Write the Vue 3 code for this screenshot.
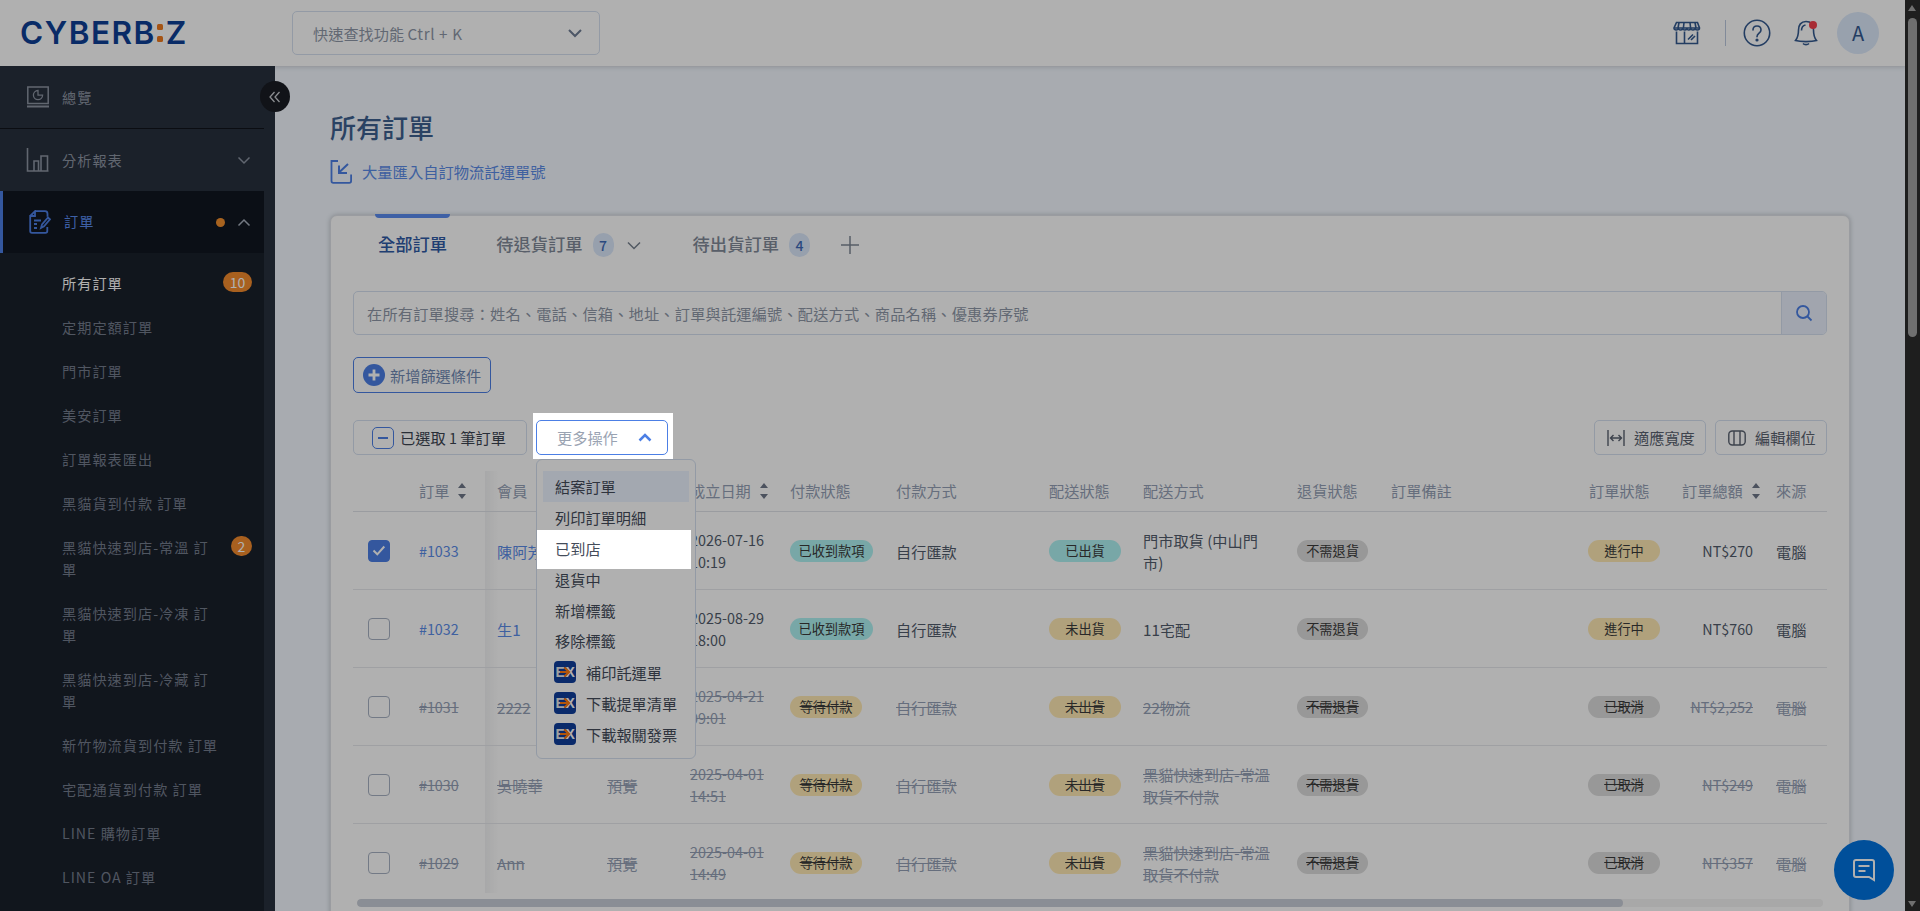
<script setup>
const subMenu = [
  { t: '所有訂單', badge: '10', active: true },
  { t: '定期定額訂單' },
  { t: '門市訂單' },
  { t: '美安訂單' },
  { t: '訂單報表匯出' },
  { t: '黑貓貨到付款 訂單' },
  { t: '黑貓快速到店-常溫 訂單', badge: '2' },
  { t: '黑貓快速到店-冷凍 訂單' },
  { t: '黑貓快速到店-冷藏 訂單' },
  { t: '新竹物流貨到付款 訂單' },
  { t: '宅配通貨到付款 訂單' },
  { t: 'LINE 購物訂單' },
  { t: 'LINE OA 訂單' }
]
const heads = [
  { t: '' }, { t: '訂單', sort: true }, { t: '會員', cls: 'member' }, { t: '' },
  { t: '成立日期', sort: true, cls: 'date' }, { t: '付款狀態' }, { t: '付款方式' }, { t: '配送狀態' },
  { t: '配送方式' }, { t: '退貨狀態' }, { t: '訂單備註' }, { t: '訂單狀態' }, { t: '訂單總額', sort: true }, { t: '來源' }
]
const rows = [
  { id: '#1033', checked: true, member: '陳阿芳', link: true, date: ['2026-07-16', '10:19'], pay: ['已收到款項', 'teal'], ship: ['已出貨', 'teal'], method: ['門市取貨 (中山門', '市)'], state: ['進行中', 'amber'], total: 'NT$270' },
  { id: '#1032', member: '生1', link: true, date: ['2025-08-29', '18:00'], pay: ['已收到款項', 'teal'], ship: ['未出貨', 'amber'], method: ['11宅配'], state: ['進行中', 'amber'], total: 'NT$760' },
  { id: '#1031', off: true, member: '2222', date: ['2025-04-21', '09:01'], pay: ['等待付款', 'amber'], ship: ['未出貨', 'amber'], method: ['22物流'], state: ['已取消', 'gray'], total: 'NT$2,252' },
  { id: '#1030', off: true, member: '吳曉華', preview: true, date: ['2025-04-01', '14:51'], pay: ['等待付款', 'amber'], ship: ['未出貨', 'amber'], method: ['黑貓快速到店-常溫', '取貨不付款'], state: ['已取消', 'gray'], total: 'NT$249' },
  { id: '#1029', off: true, member: 'Ann', preview: true, date: ['2025-04-01', '14:49'], pay: ['等待付款', 'amber'], ship: ['未出貨', 'amber'], method: ['黑貓快速到店-常溫', '取貨不付款'], state: ['已取消', 'gray'], total: 'NT$357' }
]
const plainActions = ['列印訂單明細']
const afterActions = ['退貨中', '新增標籤', '移除標籤']
const exActions = ['補印託運單', '下載提單清單', '下載報關發票']
</script>

<template>
  <div class="root">
    <div class="page">
      <header class="topbar">
        <div class="logo">CYBERB<span class="logo-dots"><i></i><i></i></span>Z</div>
        <div class="quick">
          <span>快速查找功能 <span class="lat wide">Ctrl + K</span></span>
          <svg width="16" height="10" viewBox="0 0 16 10"><path d="M2 2l6 6 6-6" fill="none" stroke="#6f7d94" stroke-width="2"/></svg>
        </div>
        <div class="top-right">
          <svg class="ic-store" width="28" height="24" viewBox="0 0 28 24" fill="none" stroke="#33598f" stroke-width="1.6">
            <path d="M3.500 1.500h21l2 5.500c0 2.600-4.200 2.600-4.400 0 0 2.600-4.200 2.600-4.300 0 0 2.600-4.200 2.600-3.800 0 0 2.600-4.200 2.600-4.300 0 0 2.600-4.200 2.600-4.400 0-.2 2.600-4.400 2.600-4.300 0z"/>
            <path d="M6 1.500L5 7M11 1.500L10.400 7M17 1.500L17.600 7M22 1.500L23 7M1.500 7h25"/>
            <path d="M3.500 10.500V22.500h21V10.500M11.500 10.500V22.500M15 18.500l5-5M18 19l4-4"/>
          </svg>
          <span class="vline"></span>
          <svg width="28" height="28" viewBox="0 0 28 28" fill="none" stroke="#33598f" stroke-width="1.6">
            <circle cx="14" cy="14" r="12.700"/>
            <path d="M10 11c0-5.400 8-5.400 8 0 0 3.300-4 3.200-4 6.700" stroke-linecap="round"/>
            <circle cx="14" cy="21" r=".8" fill="#33598f"/>
          </svg>
          <span class="bell">
            <svg width="24" height="28" viewBox="0 0 24 28" fill="none" stroke="#33598f" stroke-width="1.6">
              <path d="M12 2.500c-5 0-7.500 3.500-7.500 8.500 0 5-1 8-3 10.500 5 1.500 16 1.500 21 0-2-2.500-3-5.500-3-10.500 0-5-2.500-8.500-7.500-8.500z"/>
              <path d="M7.500 11.500c0-3 1.500-5 4-5.500M9 24.500c1.500 1.500 4.500 1.500 6 0"/>
            </svg>
            <i class="bell-dot"></i>
          </span>
          <span class="avatar">A</span>
        </div>
      </header>

      <div class="body">
        <aside class="sidebar">
          <div class="side-inner">
            <div class="menu-row first">
              <svg width="24" height="22" viewBox="0 0 24 22" fill="none" stroke="#8d95a3" stroke-width="1.500">
                <rect x="1.800" y="1" width="20.400" height="16.500"/>
                <path d="M1 20.500h22" stroke-width="2"/>
                <path d="M12 4.500a4.600 4.600 0 1 0 4.600 4.600H12z" stroke-width="1.300"/>
              </svg>
              <span class="menu-text">總覽</span>
            </div>
            <div class="menu-row">
              <svg width="24" height="24" viewBox="0 0 24 24" fill="none" stroke="#8d95a3" stroke-width="1.600">
                <path d="M1.500 0v23h21M8 23V13h4.500v10M15 23V8h6.500v15" />
              </svg>
              <span class="menu-text">分析報表</span>
              <svg class="chev" width="14" height="9" viewBox="0 0 14 9"><path d="M1.500 1.500L7 7l5.500-5.500" fill="none" stroke="#8d95a3" stroke-width="1.500"/></svg>
            </div>
            <div class="menu-row active">
              <svg class="ord-ic" width="22" height="24" viewBox="0 0 22 24" fill="none" stroke="#4c7fe5" stroke-width="1.800">
                <path d="M6 1.200h10c1.500 0 2.500 1 2.500 2.500v3M1.200 6L6 1.200V6H1.200v15c0 1 .8 1.800 1.800 1.800h13.500c1 0 1.800-.8 1.800-1.800v-4"/>
                <path d="M5 10.500h7M5 14h3M5 18h3M12 18l1-3.500 6-7 2 1.800-6 7z"/>
              </svg>
              <span class="menu-text">訂單</span>
              <i class="dot"></i>
              <svg class="chev up" width="14" height="9" viewBox="0 0 14 9"><path d="M1.500 7.500L7 2l5.500 5.500" fill="none" stroke="#a8b0bd" stroke-width="1.500"/></svg>
            </div>
            <ul class="sub">
              <li v-for="m in subMenu" :key="m.t" :class="{ on: m.active }">
                <span class="sub-text">{{ m.t }}</span>
                <b v-if="m.badge" class="sub-badge" :class="{ round: m.badge.length === 1 }">{{ m.badge }}</b>
              </li>
            </ul>
          </div>
          <div class="side-strip"></div>
          <button class="collapse">
            <svg width="12" height="12" viewBox="0 0 12 12" fill="none" stroke="#c9ccd1" stroke-width="1.300"><path d="M5.500 1L1 6l4.500 5M10.500 1L6 6l4.500 5"/></svg>
          </button>
        </aside>

        <main class="main">
          <h1 class="title">所有訂單</h1>
          <div class="import">
            <svg width="23" height="24" viewBox="0 0 23 24" fill="none" stroke="#4c7fe5" stroke-width="1.800">
              <path d="M8 1H1.500v20c0 1 .8 1.800 1.800 1.800h16c1 0 1.800-.8 1.800-1.800v-6.500"/>
              <path d="M18 4l-9 8.500M9 5.500v7.500h8" stroke-width="2"/>
            </svg>
            <span>大量匯入自訂物流託運單號</span>
          </div>

          <section class="card">
            <div class="tabs">
              <div class="tab on">全部訂單</div>
              <div class="tab second">待退貨訂單</div>
              <span class="tab-badge">7</span>
              <svg class="tab-chev" width="14" height="9" viewBox="0 0 14 9"><path d="M1 1.500L7 7.500l6-6" fill="none" stroke="#77818f" stroke-width="1.500"/></svg>
              <div class="tab third">待出貨訂單</div>
              <span class="tab-badge">4</span>
              <svg class="tab-plus" width="18" height="18" viewBox="0 0 18 18"><path d="M9 0v18M0 9h18" stroke="#7f8896" stroke-width="1.500"/></svg>
            </div>

            <div class="search">
              <span class="ph">在所有訂單搜尋：姓名、電話、信箱、地址、訂單與託運編號、配送方式、商品名稱、優惠券序號</span>
              <span class="search-btn">
                <svg width="18" height="18" viewBox="0 0 18 18" fill="none" stroke="#4c7fe5" stroke-width="1.800"><circle cx="8" cy="8" r="6"/><path d="M12.500 12.500L16.500 16.500"/></svg>
              </span>
            </div>

            <div class="add-filter">
              <svg width="22" height="22" viewBox="0 0 22 22"><circle cx="11" cy="11" r="11" fill="#4c7fe5"/><path d="M11 5.500v11M5.500 11h11" stroke="#fff" stroke-width="2.800"/></svg>
              <span>新增篩選條件</span>
            </div>

            <div class="toolbar">
              <div class="selected">
                <span class="minus-box"><i></i></span>
                <span class="sel-text">已選取 <span class="lat">1</span> 筆訂單</span>
              </div>
              <div class="more">
                <div class="more-spot">
                  <div class="more-btn">
                    <span class="lift">更多操作</span>
                    <svg width="14" height="9" viewBox="0 0 14 9"><path d="M1.500 7.500L7 2l5.500 5.500" fill="none" stroke="#4c7fe5" stroke-width="2.500"/></svg>
                  </div>
                </div>
                <div class="drop">
                  <div class="act hover">結案訂單</div>
                  <div v-for="a in plainActions" :key="a" class="act">{{ a }}</div>
                  <div class="act spot">已到店</div>
                  <div v-for="a in afterActions" :key="a" class="act">{{ a }}</div>
                  <div v-for="a in exActions" :key="a" class="act ex">
                    <svg width="22" height="22" viewBox="0 0 22 22">
                      <rect width="22" height="22" rx="4" fill="#0f3d9c"/>
                      <text x="1.500" y="16" font-size="14" font-weight="700" fill="#e8e8e8" font-family="Liberation Sans, sans-serif">E</text>
                      <text x="11.500" y="16" font-size="14" font-weight="700" fill="#ffffff" font-family="Liberation Sans, sans-serif">X</text>
                      <path d="M6 11h8.500M10.500 6.500l4.500 4.500-4.500 4.500" fill="none" stroke="#ff7a10" stroke-width="2.200"/>
                    </svg>
                    <span>{{ a }}</span>
                  </div>
                </div>
              </div>
              <div class="tools">
                <div class="tool">
                  <svg width="18" height="16" viewBox="0 0 18 16" fill="none" stroke="#5a6270" stroke-width="1.400"><path d="M1 0v16M17 0v16M4 8h10M6.500 5L3.500 8l3 3M11.500 5l3 3-3 3"/></svg>
                  <span class="lift">適應寬度</span>
                </div>
                <div class="tool">
                  <svg width="18" height="16" viewBox="0 0 18 16" fill="none" stroke="#5a6270" stroke-width="1.400"><rect x=".8" y="1" width="16.400" height="14" rx="3.500"/><path d="M6 1v14M12 1v14"/></svg>
                  <span class="lift">編輯欄位</span>
                </div>
              </div>
            </div>

            <div class="table">
              <div class="tr head">
                <div v-for="(h, i) in heads" :key="i" class="td" :class="h.cls">
                  <span class="lift">{{ h.t }}</span>
                  <svg v-if="h.sort" class="sort" width="8" height="16" viewBox="0 0 8 16"><path d="M4 0l4 5H0zM4 16l4-5H0z" fill="#6f7889"/></svg>
                </div>
              </div>
              <div v-for="r in rows" :key="r.id" class="tr" :class="{ off: r.off }">
                <div class="td center">
                  <span class="check" :class="{ checked: r.checked }">
                    <svg v-if="r.checked" width="14" height="11" viewBox="0 0 14 11"><path d="M1.500 5.500l3.800 3.800 7-7.800" fill="none" stroke="#fff" stroke-width="2"/></svg>
                  </span>
                </div>
                <div class="td"><span class="lat txt" :class="{ link: !r.off }">{{ r.id }}</span></div>
                <div class="td member"><span class="txt" :class="{ link: r.link }">{{ r.member }}</span></div>
                <div class="td"><span v-if="r.preview" class="txt">預覽</span></div>
                <div class="td date"><span class="lat txt lines"><span v-for="d in r.date" :key="d">{{ d }}</span></span></div>
                <div class="td"><span class="pill" :class="r.pay[1]">{{ r.pay[0] }}</span></div>
                <div class="td"><span class="txt">自行匯款</span></div>
                <div class="td"><span class="pill" :class="r.ship[1]">{{ r.ship[0] }}</span></div>
                <div class="td"><span class="txt lines"><span v-for="l in r.method" :key="l">{{ l }}</span></span></div>
                <div class="td"><span class="pill gray narrow">不需退貨</span></div>
                <div class="td"></div>
                <div class="td state"><span class="pill" :class="r.state[1]">{{ r.state[0] }}</span></div>
                <div class="td total"><span class="lat txt">{{ r.total }}</span></div>
                <div class="td"><span class="txt">電腦</span></div>
              </div>
            </div>
            <div class="hbar"><i></i></div>
          </section>
        </main>
      </div>
    </div>

    <div class="vscroll">
      <i class="arrow up"></i>
      <i class="thumb"></i>
      <i class="arrow down"></i>
    </div>

    <div class="fab">
      <svg width="24" height="24" viewBox="0 0 24 24" fill="none" stroke="#fff" stroke-width="2">
        <path d="M4 2h16c1.200 0 2 .8 2 2v18l-5-3H4c-1.200 0-2-.8-2-2V4c0-1.200.8-2 2-2z"/>
        <path d="M6.500 8h11M6.500 13h7"/>
      </svg>
    </div>
    <div class="dim"></div>
  </div>
</template>

<style>
html, body { margin: 0; overflow: hidden; }
</style>

<style scoped>
.root {
  display: flex; width: 1920px; height: 911px; overflow: hidden;
  font-family: "Noto Sans CJK TC", "Noto Sans", sans-serif;
  font-size: 15.2px; line-height: 22px; color: #444c5a; background: #f3f8ff;
}
.lat { font-size: 14.300px; }
.lat.wide { font-size: 15.200px; letter-spacing: .6px; }
.lift { padding-bottom: 2px; }
.dim { position: fixed; inset: 0; background: rgba(0, 0, 0, .31); z-index: 100; }
.page { width: 1905px; display: flex; flex-direction: column; }

.topbar { height: 66px; flex: none; background: #fff; display: flex; align-items: center; padding-left: 21px; box-shadow: 0 1px 6px rgba(0,0,0,.08); }
.logo { width: 271px; font-family: Inter, sans-serif; font-weight: 600; font-size: 31.500px; letter-spacing: 1.500px; line-height: 30px; color: #0e3f95; display: flex; align-items: center; margin-left: -1px; }
.logo-dots { display: inline-flex; flex-direction: column; gap: 6px; margin: 0 3px 0 1px; }
.logo-dots i { width: 6px; height: 6px; border-radius: 1.500px; background: #f07a1e; }
.quick { width: 308px; height: 44px; box-sizing: border-box; border: 1px solid #d5e0f0; border-radius: 5px; display: flex; align-items: center; justify-content: space-between; padding: 0 16px 0 20px; color: #8e97a7; margin-left: 1px; }
.top-right { margin-left: auto; display: flex; align-items: center; padding-right: 26px; }
.ic-store { margin-right: 24px; }
.vline { width: 1px; height: 26px; background: #bcc9de; margin-right: 17px; }
.bell { position: relative; margin-left: 23px; display: flex; }
.bell-dot { position: absolute; right: 1px; top: 2px; width: 8px; height: 8px; border-radius: 50%; background: #f3404c; }
.avatar { width: 42px; height: 42px; margin-left: 19px; border-radius: 50%; background: #dce9fb; color: #33598f; font-size: 20px; display: flex; align-items: center; justify-content: center; }

.body { flex: 1; display: flex; min-height: 0; }
.sidebar { width: 275px; flex: none; display: flex; background: #28303d; position: relative; }
.side-inner { width: 264px; display: flex; flex-direction: column; background: #1a202b; }
.side-strip { width: 11px; background: #28303d; }
.menu-row { height: 62px; flex: none; display: flex; align-items: center; padding: 0 13px 0 26px; background: #28303d; color: #8d95a3; font-size: 14.200px; letter-spacing: 1px; box-sizing: border-box; }
.menu-row.first { height: 63px; border-bottom: 1px solid #10141b; }
.menu-text { margin-left: 12px; flex: 1; }
.menu-row.active { background: #111621; color: #5a8cf0; border-left: 3px solid #4c7fe5; padding-left: 26px; }
.menu-row.active .menu-text { margin-left: 13px; padding-bottom: 2px; }
.chev { margin-left: auto; }
.dot { width: 9px; height: 9px; border-radius: 50%; background: #f4902e; margin-right: 12px; }
.sub { list-style: none; margin: 0; padding: 8px 0 0; flex: 1; }
.sub li { display: flex; justify-content: space-between; align-items: flex-start; padding: 11px 12px 11px 62px; color: #747d8d; font-size: 14.200px; letter-spacing: 1px; }
.sub li.on { color: #fff; }
.sub-text { width: 158px; }
.sub-badge { font-weight: 400; background: #f48b2d; color: #fff; font-size: 14px; letter-spacing: 0; line-height: 20px; height: 20px; width: 29px; text-align: center; border-radius: 10px; margin-top: 0; }
.sub-badge.round { width: 21px; }
.collapse { position: absolute; left: 260px; top: 15px; width: 30px; height: 31px; border-radius: 50%; border: 0; padding: 0; background: #191c23; display: flex; align-items: center; justify-content: center; z-index: 5; }

.main { flex: 1; min-width: 0; padding: 43px 55px 0; box-shadow: inset 0 5px 5px -5px rgba(0,0,0,.12); }
.title { margin: 0; font-size: 26px; line-height: 36px; font-weight: 500; color: #3e6090; }
.import { margin-top: 15px; height: 24px; display: flex; align-items: center; gap: 9px; color: #5b8ce8; font-size: 15.300px; }
.import span { padding-bottom: 2px; }

.card { position: static; margin-top: 31px; height: 700px; background: #fff; border-radius: 7px; padding: 15px 22px 0; border: 1px solid #dfe3e8; box-shadow: 0 0 5px rgba(0,0,0,.22); }
.tabs { display: flex; align-items: center; height: 30px; padding-left: 25px; }
.tab { font-size: 17.300px; font-weight: 500; color: #818a98; line-height: 30px; padding-bottom: 4px; }
.tab.on { color: #2f5aa6; position: relative; }
.tab.on::before { content: ""; position: absolute; left: -3px; right: -3px; top: -15px; height: 4px; background: #5a8cf0; border-radius: 0 0 4px 4px; }
.tab.second { margin-left: 49px; }
.tab.third { margin-left: 52px; }
.tab-badge { margin-left: 10px; width: 21px; height: 24px; border-radius: 11px; background: #dbe8fb; color: #3e6ab8; font-weight: 500; font-size: 14px; display: flex; align-items: center; justify-content: center; margin-bottom: 2px; }
.tab-chev { margin-left: 13px; margin-bottom: 2px; }
.tab-plus { margin-left: 31px; margin-bottom: 2px; }

.search { margin-top: 30px; height: 44px; box-sizing: border-box; border: 1px solid #d5e0f0; border-radius: 5px; display: flex; align-items: center; justify-content: space-between; padding-left: 13px; color: #8e97a7; letter-spacing: .2px; overflow: hidden; }
.ph { padding-bottom: 1px; }
.search-btn { width: 44px; height: 44px; background: #e9f0fc; border-left: 1px solid #d5e0f0; display: flex; align-items: center; justify-content: center; }

.add-filter { margin-top: 22px; width: 138px; height: 36px; box-sizing: border-box; border: 1px solid #4c7fe5; border-radius: 5px; display: flex; align-items: center; padding-left: 9px; gap: 5px; color: #718ab4; }
.add-filter span { padding-bottom: 0; }

.toolbar { margin-top: 27px; display: flex; height: 35px; }
.selected { width: 174px; box-sizing: border-box; border: 1px solid #d5e0f0; border-radius: 5px; display: flex; align-items: center; padding-left: 18px; gap: 6px; color: #3b4350; }
.sel-text { padding-bottom: 1px; }
.minus-box { width: 22px; height: 22px; box-sizing: border-box; border: 1px solid #4c7fe5; border-radius: 5px; display: flex; align-items: center; justify-content: center; }
.minus-box i { width: 10px; height: 2px; background: #4c7fe5; }
.more { position: relative; margin-left: 9px; }
.more-spot { position: relative; z-index: 101; }
.more-spot::before { content: ""; position: absolute; z-index: -1; left: -3px; right: -5px; top: -7px; bottom: -4px; background: #fff; }
.more-btn { width: 132px; height: 35px; box-sizing: border-box; background: #fff; border: 1px solid #4c7fe5; border-radius: 5px; display: flex; align-items: center; padding-left: 20px; gap: 20px; color: #9aa3b2; }
.drop { position: absolute; left: 0; top: 39px; width: 160px; height: 300px; box-sizing: border-box; padding: 11px 6px 0; background: #fff; border: 1px solid #d5e0f0; border-radius: 6px; }
.act { height: 30.900px; line-height: 30px; padding-left: 12px; white-space: nowrap; }
.act.hover { background: #ecf3ff; }
.act.spot { position: relative; z-index: 101; }
.act.spot::before { content: ""; position: absolute; z-index: -1; left: -6px; right: -2px; top: -3px; bottom: -5px; background: #fff; }
.act.ex { display: flex; align-items: center; gap: 10px; padding-left: 11px; }
.tools { margin-left: auto; display: flex; gap: 9px; }
.tool { width: 112px; box-sizing: border-box; border: 1px solid #d5e0f0; border-radius: 5px; display: flex; align-items: center; padding-left: 12px; gap: 9px; color: #5a6270; }
.tool .lift, .more-btn .lift { padding-bottom: 1px; }

.table { margin-top: 16px; height: 422px; overflow: hidden; }
.tr { display: grid; grid-template-columns: 66px 66px 122px 83px 100px 106px 153px 94px 154px 94px 198px 93px 94px 51px; height: 78px; box-sizing: border-box; border-bottom: 1px solid #e6e8ec; color: #525c6c; }
.tr.head { height: 41px; color: #94a0b5; border-bottom: 1px solid #dfe3e8; }
.txt { padding-bottom: 0; }
.td { display: flex; align-items: center; min-width: 0; white-space: nowrap; }
.td.center { padding-left: 15px; }
.td.member { padding-left: 11px; background: linear-gradient(90deg, rgba(60,70,90,.06), rgba(60,70,90,0) 12px); border-left: 1px solid rgba(60,70,90,.06); box-sizing: border-box; }
.td.date .lat { font-size: 14.400px; }
.td.state { margin-left: -1px; }
.td.total { justify-content: flex-end; padding-right: 23px; }
.head .td.total, .head .td { justify-content: flex-start; padding-right: 0; }
.sort { margin-left: 9px; }
.check { width: 22px; height: 22px; box-sizing: border-box; border: 1px solid #a7b1c2; border-radius: 4px; display: flex; align-items: center; justify-content: center; background: #fff; }
.check.checked { background: #4c7fe5; border-color: #4c7fe5; }
.link { color: #5b8ce8; }
.lines { display: flex; flex-direction: column; }
.off .txt, .off .pill { text-decoration: line-through; }
.off { color: #94a0b5; }
.pill { box-sizing: border-box; min-width: 72px; padding: 0 8.500px; height: 22px; line-height: 22px; border-radius: 11px; text-align: center; font-size: 13.200px; color: #3a3a3a; }
.pill.narrow { min-width: 71px; }
.teal { background: #aef2f2; }
.amber { background: #ffeab4; }
.gray { background: #dcdcdc; }
.hbar { margin: 6px 4px 0; height: 8px; background: #f3f3f3; border-radius: 4px; overflow: hidden; }
.hbar i { display: block; width: 1266px; height: 8px; border-radius: 4px; background: #c9ced8; }

.vscroll { position: relative; z-index: 200; width: 15px; background: #1e1e1e; }
.vscroll .thumb { position: absolute; left: 3px; top: 18px; width: 9px; height: 319px; border-radius: 5px; background: #6f6f6f; }
.arrow { position: absolute; left: 3px; width: 0; height: 0; border-left: 4.500px solid transparent; border-right: 4.500px solid transparent; }
.arrow.up { top: 5px; border-bottom: 6px solid #6f6f6f; }
.arrow.down { bottom: 4px; border-top: 6px solid #6f6f6f; }

.fab { position: fixed; right: 26px; bottom: 11px; width: 60px; height: 60px; border-radius: 50%; background: #0073e0; display: flex; align-items: center; justify-content: center; z-index: 50; }
</style>
